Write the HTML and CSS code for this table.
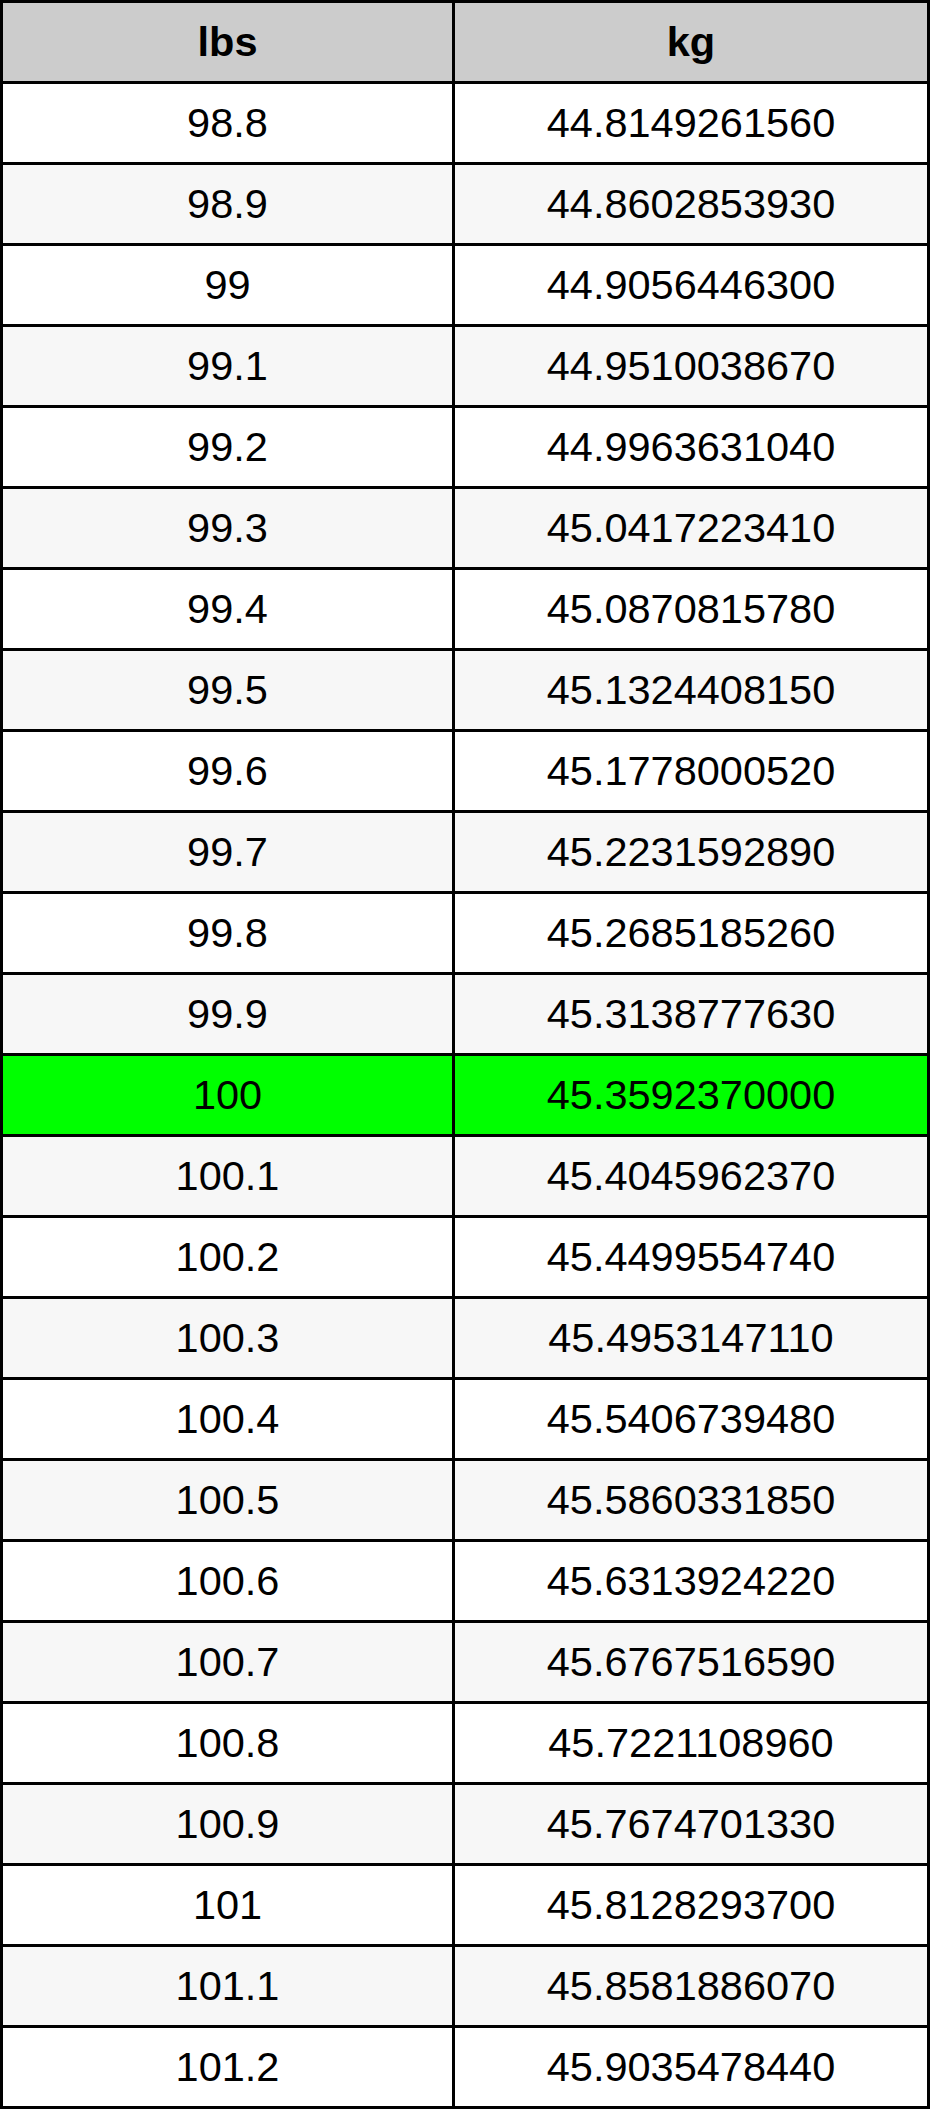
FILE: index.html
```html
<!DOCTYPE html>
<html>
<head>
<meta charset="utf-8">
<link rel="stylesheet" href="styles.css">
</head>
<body>
<table class="conv">
<colgroup><col class="c-lbs"><col class="c-kg"></colgroup>
<thead>
<tr><th>lbs</th><th>kg</th></tr>
</thead>
<tbody>
<tr><td>98.8</td><td>44.8149261560</td></tr>
<tr><td>98.9</td><td>44.8602853930</td></tr>
<tr><td>99</td><td>44.9056446300</td></tr>
<tr><td>99.1</td><td>44.9510038670</td></tr>
<tr><td>99.2</td><td>44.9963631040</td></tr>
<tr><td>99.3</td><td>45.0417223410</td></tr>
<tr><td>99.4</td><td>45.0870815780</td></tr>
<tr><td>99.5</td><td>45.1324408150</td></tr>
<tr><td>99.6</td><td>45.1778000520</td></tr>
<tr><td>99.7</td><td>45.2231592890</td></tr>
<tr><td>99.8</td><td>45.2685185260</td></tr>
<tr><td>99.9</td><td>45.3138777630</td></tr>
<tr class="hl"><td>100</td><td>45.3592370000</td></tr>
<tr><td>100.1</td><td>45.4045962370</td></tr>
<tr><td>100.2</td><td>45.4499554740</td></tr>
<tr><td>100.3</td><td>45.4953147110</td></tr>
<tr><td>100.4</td><td>45.5406739480</td></tr>
<tr><td>100.5</td><td>45.5860331850</td></tr>
<tr><td>100.6</td><td>45.6313924220</td></tr>
<tr><td>100.7</td><td>45.6767516590</td></tr>
<tr><td>100.8</td><td>45.7221108960</td></tr>
<tr><td>100.9</td><td>45.7674701330</td></tr>
<tr><td>101</td><td>45.8128293700</td></tr>
<tr><td>101.1</td><td>45.8581886070</td></tr>
<tr><td>101.2</td><td>45.9035478440</td></tr>
</tbody>
</table>
</body>
</html>
```

FILE: styles.css
```css
html, body {
  margin: 0;
  padding: 0;
  background: #ffffff;
}

.conv {
  border-collapse: separate;
  border-spacing: 0;
  table-layout: fixed;
  width: 930px;
  border-top: 3px solid #000;
  border-left: 3px solid #000;
  font-family: "Liberation Sans", Arial, sans-serif;
  font-size: 41.5px;
  color: #000;
}

.c-lbs { width: 452px; }
.c-kg { width: 475px; }

.conv th,
.conv td {
  box-sizing: border-box;
  height: 81px;
  padding: 0;
  text-align: center;
  vertical-align: middle;
  border-right: 3px solid #000;
  border-bottom: 3px solid #000;
  line-height: 1;
}

.conv th {
  background: #cccccc;
  font-weight: bold;
}

.conv tbody tr:nth-child(odd) td { background: #ffffff; }
.conv tbody tr:nth-child(even) td { background: #f7f7f7; }
.conv tbody tr.hl td { background: #00ff00; }
```
